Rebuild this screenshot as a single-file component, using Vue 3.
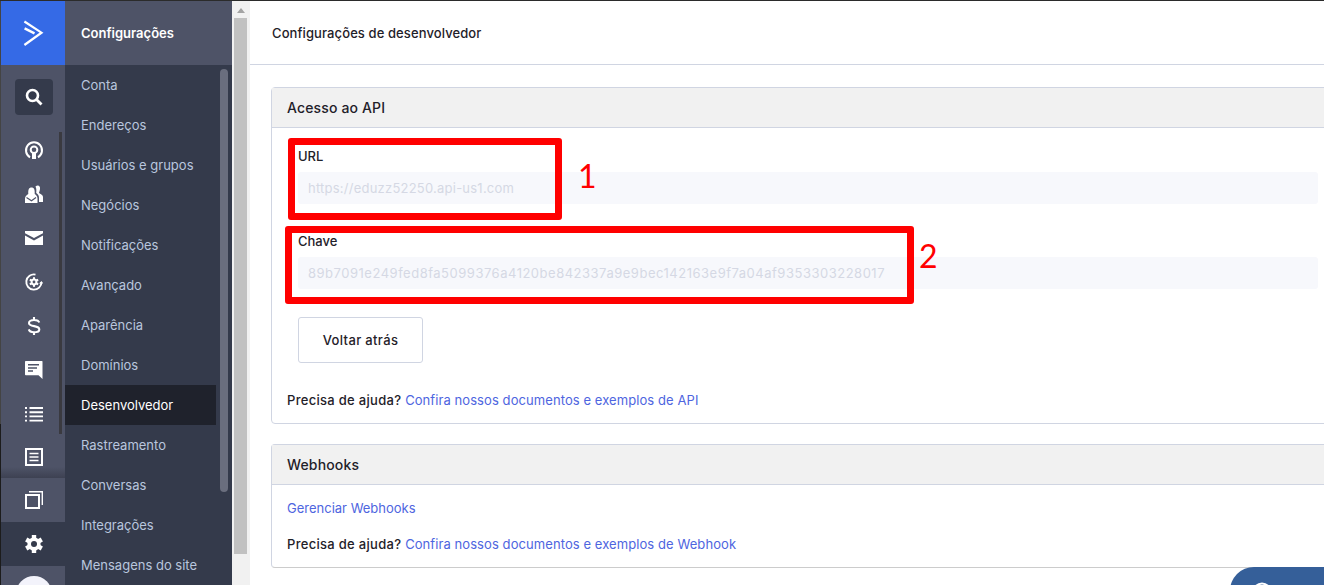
<script setup>
const items = ['Conta','Endereços','Usuários e grupos','Negócios','Notificações','Avançado','Aparência','Domínios','Desenvolvedor','Rastreamento','Conversas','Integrações','Mensagens do site']
</script>

<template>
  <div class="page">
    <aside class="rail">
      <div class="logo">
        <svg width="24" height="26" viewBox="0 0 24 26"><path d="M3.4 1.5 L20.5 12.7 L3.4 25" fill="none" stroke="#fff" stroke-width="2.2"/><path d="M3.6 8.4 L13.5 13.4" fill="none" stroke="#fff" stroke-width="2.4"/></svg>
      </div>
      <div class="rail-body">
        <div class="rail-thumb"></div>
        <div class="search">
          <svg width="20" height="20" viewBox="0 0 20 20"><circle cx="8.5" cy="8.5" r="5.5" fill="none" stroke="#fff" stroke-width="2.6"/><path d="M12.5 12.5 L17.5 17.5" stroke="#fff" stroke-width="2.8"/></svg>
        </div>
        <div class="ri first"><svg viewBox="0 0 18 18"><path d="M5 16.3 A8 8 0 1 1 13 16.3" fill="none" stroke="#fff" stroke-width="2"/><circle cx="9" cy="8.7" r="3.3" fill="none" stroke="#fff" stroke-width="2"/><rect x="7" y="12" width="4" height="6" fill="#fff"/></svg></div>
        <div class="ri"><svg viewBox="0 0 18 18"><path d="M0 18 V13.5 C0 11 2 10 3.3 9 C3 4.5 4 2.5 6.5 2.5 C9 2.5 10 4.5 9.7 9 C11 10 12.5 11 12.5 13.5 V18 Z" fill="#fff"/><path d="M1.5 12.5 L6.5 15.8 L11 12.5" fill="none" stroke="#4e5367" stroke-width="1.1"/><path d="M10.5 1.5 C13 -0.5 15.5 1 15 4 C14.8 6 14 7 14 8 C15 9 18 9.5 18 12 V17 H14 V12.5 C14 10.5 12.5 8.5 11.2 8 C11.5 5.5 11.5 3.5 10.5 1.5 Z" fill="#fff"/></svg></div>
        <div class="ri"><svg viewBox="0 0 18 18"><path d="M0 2 H18 V4.2 L9 9 L0 4.2 Z M0 6.6 L9 11.4 L18 6.6 V16 H0 Z" fill="#fff"/></svg></div>
        <div class="ri"><svg viewBox="0 0 18 18"><path d="M16.5 9 A7.6 7.6 0 1 1 10.5 1.6" fill="none" stroke="#fff" stroke-width="1.9"/><g fill="#fff" transform="translate(9 9)"><circle r="3.4"/><rect x="-1" y="-4.8" width="2" height="9.6"/><rect x="-1" y="-4.8" width="2" height="9.6" transform="rotate(60)"/><rect x="-1" y="-4.8" width="2" height="9.6" transform="rotate(120)"/></g><circle cx="9" cy="9" r="1.4" fill="#4e5367"/><path d="M14 10.5 L16.6 8 L18 10.5 Z" fill="#fff"/></svg></div>
        <div class="ri"><svg viewBox="0 0 18 18"><path d="M14.2 5.6 C13.8 4 12 3 9 3 C6 3 4 4.1 4 6 C4 10.5 14.3 7.8 14.3 12.4 C14.3 14.2 12.3 15.2 9 15.2 C6 15.2 4.3 14.2 3.8 12.4 M9 0 V3 M9 15 V18" fill="none" stroke="#fff" stroke-width="2.1"/></svg></div>
        <div class="ri"><svg viewBox="0 0 18 18"><path d="M0.8 0 H17 Q17.5 0 17.5 .8 V18 L13.5 14.2 H0.8 Q0 14.2 0 13.4 V.8 Q0 0 .8 0 Z" fill="#fff"/><path d="M3 3.8 H14 M3 6.9 H12 M3 10 H8" stroke="#4e5367" stroke-width="1.5"/></svg></div>
        <div class="ri"><svg viewBox="0 0 18 18"><path d="M4.5 3 H18 M4.5 7.2 H18 M4.5 11.4 H18 M4.5 15.6 H18" stroke="#fff" stroke-width="1.9"/><path d="M0 3 H2 M0 7.2 H2 M0 11.4 H2 M0 15.6 H2" stroke="#fff" stroke-width="1.9"/></svg></div>
        <div class="ri last"><svg viewBox="0 0 18 18"><rect x="1" y="1" width="16" height="16" fill="none" stroke="#fff" stroke-width="2"/><path d="M4.5 5.5 H13.5 M4.5 9 H13.5 M4.5 12.5 H13.5" stroke="#fff" stroke-width="1.5"/></svg></div>
        <div class="ri tab"><svg viewBox="0 0 18 18"><rect x="1" y="4" width="13" height="13" fill="none" stroke="#fff" stroke-width="2"/><path d="M4 .7 H17.3 V14" fill="none" stroke="#fff" stroke-width="1.4"/></svg></div>
        <div class="ri tab cog"><svg viewBox="0 0 18 18"><g fill="#fff" transform="translate(9 9)"><circle r="6.6"/><rect x="-2.2" y="-9" width="4.4" height="18"/><rect x="-2.2" y="-9" width="4.4" height="18" transform="rotate(60)"/><rect x="-2.2" y="-9" width="4.4" height="18" transform="rotate(120)"/></g><circle cx="9" cy="9" r="3" fill="#343a4b"/></svg></div>
        <div class="avatar"></div>
      </div>
    </aside>
    <nav class="menu">
      <div class="menu-head">Configurações</div>
      <div class="menu-body">
        <div class="menu-thumb"></div>
        <a v-for="i in items" :key="i" class="item" :class="{active: i === 'Desenvolvedor'}">{{ i }}</a>
      </div>
    </nav>
    <div class="scroll"><div class="arrow"></div><div class="thumb"></div></div>
    <main class="main">
      <header class="head">Configurações de desenvolvedor</header>
      <section class="card api">
        <h2 class="card-head">Acesso ao API</h2>
        <div class="card-body">
          <label class="lab">URL</label>
          <div class="inp url">https://eduzz52250.api-us1.com</div>
          <label class="lab second">Chave</label>
          <div class="inp key">89b7091e249fed8fa5099376a4120be842337a9e9bec142163e9f7a04af9353303228017</div>
          <button class="btn">Voltar atrás</button>
        </div>
        <p class="help"><b>Precisa de ajuda?</b> <a>Confira nossos documentos e exemplos de API</a></p>
      </section>
      <section class="card hooks">
        <h2 class="card-head">Webhooks</h2>
        <p class="manage"><a>Gerenciar Webhooks</a></p>
        <p class="help h2"><b>Precisa de ajuda?</b> <a>Confira nossos documentos e exemplos de Webhook</a></p>
      </section>
      <div class="mark m1"></div>
      <div class="mark m2"></div>
      <span class="num n1">1</span>
      <span class="num n2">2</span>
      <div class="chat"><svg width="24" height="24" viewBox="0 0 24 24"><circle cx="12" cy="12" r="8.5" fill="none" stroke="#fff" stroke-width="2.2"/></svg></div>
    </main>
  </div>
</template>

<style>
html, body { margin: 0; overflow: hidden; }
</style>

<style scoped>
.page { display: flex; width: 1324px; height: 585px; overflow: hidden; background: #fff; border-top: 1px solid #2b2b2b; box-sizing: border-box; font-family: Inter, "Noto Sans", sans-serif; font-size: 13px; color: #1f2129; }
.rail { width: 65px; flex: none; border-left: 1px solid; border-image: linear-gradient(#444 423px, #1c1c1c 423px) 1; box-sizing: border-box; background: #4e5367; }
.logo { height: 64px; background: #356ae6; display: flex; align-items: center; justify-content: center; }
.rail-body { position: relative; display: flex; flex-direction: column; align-items: center; height: 520px; overflow: hidden; }
.rail-thumb { position: absolute; left: 58px; top: 67px; width: 3px; height: 302px; background: #3a3a40; }
.search { flex: none; width: 38px; height: 36px; margin: 14px 0 0 2px; border-radius: 4px; background: #343a4b; display: flex; align-items: center; justify-content: center; }
.ri { flex: none; height: 44px; width: 100%; display: flex; align-items: center; justify-content: center; padding-left: 2px; box-sizing: border-box; }
.ri svg { width: 18px; height: 18px; overflow: visible; }
.ri.first { margin-top: 13px; }
.ri.last { height: 42px; background: linear-gradient(transparent 31px, #3d4152); }
.cog { background: #343a4b; }
.avatar { flex: none; width: 36px; height: 36px; border-radius: 50%; background: #f3f3fb; margin: 10px 0 0 2px; }
.menu { width: 167px; flex: none; background: #343a4b; }
.menu-head { height: 64px; background: #4e5367; color: #fff; font-weight: 600; font-size: 13px; line-height: 64px; padding-left: 16px; }
.menu-body { position: relative; display: flex; flex-direction: column; padding-right: 16px; }
.menu-thumb { position: absolute; left: 155px; top: 4px; width: 8px; height: 423px; border-radius: 4px; background: #6a6e7e; }
.item { height: 40px; line-height: 40px; padding-left: 16px; color: #b9c6de; font-size: 13px; width: 135px; }
.item.active { background: #1f222c; color: #fff; }
.scroll { width: 18px; flex: none; background: #f1f1f1; position: relative; }
.arrow { position: absolute; left: 5px; top: 7px; border: 4px solid transparent; border-top: 0; border-bottom: 5px solid #a3a3a3; }
.thumb { position: absolute; left: 2px; top: 17px; width: 13px; height: 536px; background: #c1c1c1; }
.main { position: relative; flex: none; width: 1074px; }
.head { height: 63px; border-bottom: 1px solid #d0d5e2; line-height: 65px; padding-left: 22px; font-weight: 500; font-size: 13px; letter-spacing: .1px; }
.card { margin: 22px -20px 0 21px; border: 1px solid #d0d5e2; border-radius: 4px; box-sizing: border-box; }
.api { height: 337px; }
.hooks { margin-top: 20px; height: 124px; border-bottom-color: #ccc; }
.card-head { height: 39px; margin: 0; background: #f1f1f1; border-bottom: 1px solid #d0d5e2; font-size: 14px; font-weight: 500; line-height: 39px; padding-left: 15px; letter-spacing: .15px; }
.card-body { display: flex; flex-direction: column; align-items: flex-start; padding: 19px 26px 0; }
.lab { font-weight: 500; font-size: 13px; line-height: 18px; }
.second { margin-top: 28px; }
.inp { width: 1020px; height: 32px; margin-top: 7px; padding-left: 10px; box-sizing: border-box; border-radius: 3px; background: #f7f8fc; color: #d5d8e4; line-height: 32px; font-size: 13px; white-space: nowrap; }
.url { letter-spacing: .23px; }
.key { letter-spacing: .51px; }
.btn { margin-top: 28px; width: 125px; height: 46px; border: 1px solid #d0d5e2; border-radius: 3px; background: #fff; font: 500 13px Inter, sans-serif; letter-spacing: .35px; color: #1f2129; }
.help { margin: 28px 0 0 15px; font-size: 13px; line-height: 18px; letter-spacing: .08px; }
.help b { font-weight: 500; letter-spacing: .3px; }
.help a, .manage a { color: #4e65e0; }
.manage { margin: 14px 0 0 15px; line-height: 18px; }
.h2 { margin-top: 18px; }
.mark { position: absolute; border: 7px solid #f00; border-radius: 3px; box-sizing: border-box; }
.m1 { left: 38px; top: 137px; width: 274px; height: 82px; }
.m2 { left: 35px; top: 225px; width: 629px; height: 78px; }
.num { position: absolute; color: #f00; font: 32px Lato, sans-serif; line-height: 36px; }
.n1 { left: 328px; top: 157px; }
.n2 { left: 669px; top: 237px; }
.chat { position: absolute; left: 980px; top: 566px; width: 110px; height: 40px; border-radius: 24px 0 0 0; background: #355f99; padding: 13px 0 0 20px; box-sizing: border-box; }
</style>
